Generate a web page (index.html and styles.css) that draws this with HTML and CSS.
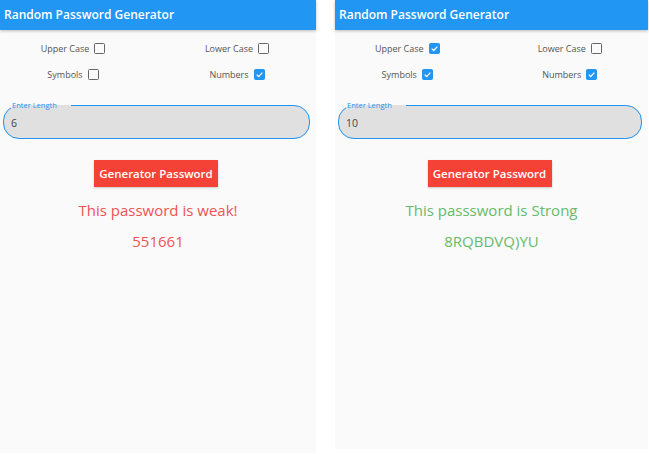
FILE: index.html
```html
<!DOCTYPE html>
<html>
<head>
<meta charset="utf-8">
<link rel="stylesheet" href="styles.css">
</head>
<body>
<div class="screens">
  <section class="panel panel-left">
    <header class="appbar">Random Password Generator</header>
    <div class="options">
      <label class="opt"><span>Upper Case</span><span class="box"></span></label>
      <label class="opt"><span>Lower Case</span><span class="box"></span></label>
      <label class="opt"><span>Symbols</span><span class="box"></span></label>
      <label class="opt"><span>Numbers</span><span class="box checked"><svg viewBox="0 0 12 12"><path d="M2.3 6.2 L4.9 8.7 L9.8 3.4" /></svg></span></label>
    </div>
    <fieldset class="field">
      <legend>Enter Length</legend>
      <div class="value">6</div>
    </fieldset>
    <div class="actions"><button class="gen">Generator Password</button></div>
    <p class="msg weak">This password is weak!</p>
    <p class="pw weak">551661</p>
  </section>
  <section class="panel panel-right">
    <header class="appbar">Random Password Generator</header>
    <div class="options">
      <label class="opt"><span>Upper Case</span><span class="box checked"><svg viewBox="0 0 12 12"><path d="M2.3 6.2 L4.9 8.7 L9.8 3.4" /></svg></span></label>
      <label class="opt"><span>Lower Case</span><span class="box"></span></label>
      <label class="opt"><span>Symbols</span><span class="box checked"><svg viewBox="0 0 12 12"><path d="M2.3 6.2 L4.9 8.7 L9.8 3.4" /></svg></span></label>
      <label class="opt"><span>Numbers</span><span class="box checked"><svg viewBox="0 0 12 12"><path d="M2.3 6.2 L4.9 8.7 L9.8 3.4" /></svg></span></label>
    </div>
    <fieldset class="field">
      <legend>Enter Length</legend>
      <div class="value">10</div>
    </fieldset>
    <div class="actions"><button class="gen">Generator Password</button></div>
    <p class="msg strong">This passsword is Strong</p>
    <p class="pw strong">8RQBDVQ)YU</p>
  </section>
</div>
</body>
</html>
```
FILE: styles.css
```css
* { box-sizing: border-box; }
html, body { margin: 0; padding: 0; background: #ffffff; }
body { font-family: "Open Sans", "Noto Sans", sans-serif; }

.screens {
  display: flex;
  align-items: flex-start;
  gap: 19px;
  width: 649px;
  height: 454px;
}

.panel {
  background: #fafafa;
  display: flex;
  flex-direction: column;
}
.panel-left { width: 316px; height: 453px; }
.panel-right { width: 313px; height: 449px; }

.appbar {
  height: 30px;
  background: #2196f3;
  color: #fff;
  font-weight: 600;
  font-size: 12px;
  line-height: 30px;
  padding-left: 4px;
  box-shadow: 0 1px 3px rgba(0,0,0,0.25);
  position: relative;
}

.options {
  display: grid;
  grid-template-columns: 1fr 1fr;
  grid-auto-rows: 26px;
  padding-top: 5px;
}
.opt {
  display: flex;
  align-items: center;
  justify-content: center;
  gap: 5px;
  font-size: 9px;
  color: #555;
  margin-right: 12px;
}
.opt:nth-child(even) { margin-right: 0; }
.box {
  width: 11px;
  height: 11px;
  border: 1.5px solid #666;
  border-radius: 1.5px;
  display: inline-flex;
}
.box.checked {
  background: #2196f3;
  border-color: #2196f3;
}
.box svg { width: 100%; height: 100%; }
.box path { fill: none; stroke: #fff; stroke-width: 1.6; }

.field {
  margin: 14px 6px 0 3px;
  padding: 0 7px 0 7px;
  border: 1.5px solid #2196f3;
  border-radius: 16px;
  background: #e0e0e0;
  height: 38px;
}
.field legend {
  font-size: 7.5px;
  color: #2196f3;
  padding: 0 14px 0 1px;
  line-height: 8px;
}
.value {
  font-size: 10.5px;
  color: #444;
  line-height: 14px;
  padding-top: 7px;
}

.actions {
  display: flex;
  justify-content: center;
  margin-top: 21px;
}
.gen {
  background: #f44336;
  color: #fff;
  border: none;
  font-family: inherit;
  font-weight: 600;
  font-size: 11.5px;
  height: 27px;
  width: 124px;
  padding: 0;
  margin-right: 4px;
  box-shadow: 0 1px 2px rgba(0,0,0,0.2);
}

.msg, .pw {
  margin: 0;
  text-align: center;
  font-size: 15px;
  line-height: 20px;
}
.msg { margin-top: 13px; }
.pw { margin-top: 11px; }
.weak { color: #ef5350; }
.strong { color: #66bb6a; }
```
